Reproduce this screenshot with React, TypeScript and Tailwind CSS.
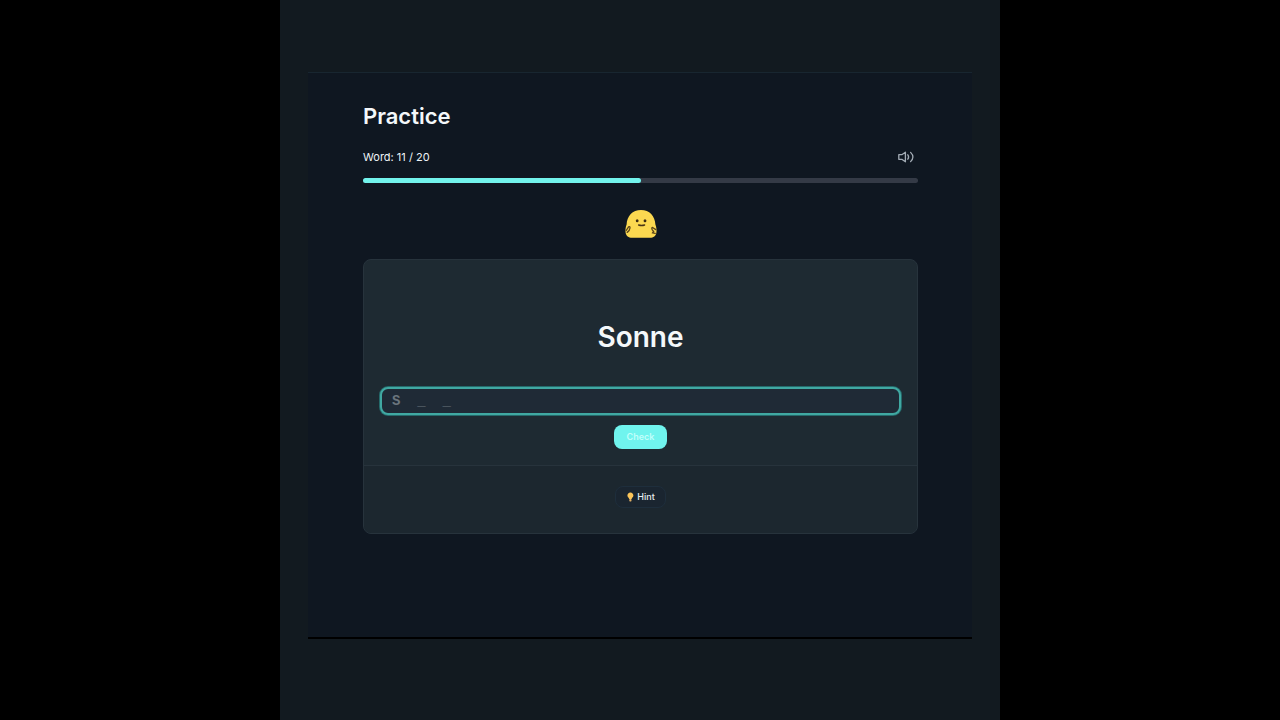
import { useState } from "react";

function Blob() {
  return (
    <svg viewBox="0 0 32 28" className="h-7 w-8" role="img" aria-label="Mascot">
      <path
        d="M16 0C7.5 0 2 6 1.6 14.5C0.6 17 0.2 20 0.6 22.5C1 26 3.6 27.6 7 27.8H25C28.4 27.6 31 26 31.4 22.5C31.8 20 31.4 17 30.4 14.5C30 6 24.5 0 16 0Z"
        fill="#fbd850"
      />
      <ellipse cx="12.2" cy="10.8" rx="1.4" ry="1.5" fill="#3d2c12" />
      <ellipse cx="20" cy="10.8" rx="1.4" ry="1.5" fill="#3d2c12" />
      <path d="M13.6 15Q16.6 16 19.6 15" fill="none" stroke="#4a3515" strokeWidth="1.4" strokeLinecap="round" />
      <path d="M1.2 20.5L3.6 16.8Q5.2 16 5 18Q4.8 20.6 2.2 22.4" fill="none" stroke="#5a4418" strokeWidth="1.3" strokeLinecap="round" />
      <path d="M30.8 19.6L28.4 18Q27 16.6 26.8 18.2Q26.8 20.4 28.6 21.4L27.6 22.8L30.2 23.4" fill="none" stroke="#5a4418" strokeWidth="1.3" strokeLinecap="round" />
    </svg>
  );
}

function Speaker() {
  return (
    <svg
      viewBox="0 0 16 12"
      className="h-3 w-4"
      fill="none"
      stroke="currentColor"
      strokeWidth="1.3"
      strokeLinecap="round"
      strokeLinejoin="round"
      aria-hidden="true"
    >
      <path d="M7.4 1.2V10.8L3.8 8.3H0.8V3.7H3.8Z" />
      <path d="M9.8 3.8Q11.4 6 9.8 8.2" />
      <path d="M12.6 1.4Q17.2 6 12.6 10.6" />
    </svg>
  );
}

function Bulb() {
  return (
    <svg viewBox="0 0 8 10" className="h-[10px] w-2" aria-hidden="true">
      <path d="M4.4 0.4C2.6 0.4 1.4 1.8 1.4 3.5C1.4 5 2.8 5.6 3.2 7H5.6C6 5.6 7.4 5 7.4 3.5C7.4 1.8 6.2 0.4 4.4 0.4Z" fill="#fbc55a" />
      <rect x="3.3" y="7" width="2.2" height="2.6" rx="0.8" fill="#e0ae64" />
    </svg>
  );
}

export default function App() {
  const [answer, setAnswer] = useState("");
  const current = 11;
  const total = 20;
  const done = current - 1;

  return (
    <div className="flex min-h-screen justify-center bg-black font-['Inter',sans-serif] text-[#f4f8fa]">
      <div className="flex w-full max-w-[720px] flex-col bg-[#121a20] px-7 pt-18 pb-[81px]">
        <main className="flex grow flex-col border-t border-b-2 border-t-[#182630] border-b-black bg-[#0f1721] pt-7 pr-[54px] pl-[55px]">
          <div className="w-full">
            <h1 className="text-[22px] leading-[30px] font-semibold">Practice</h1>

            <div className="mt-[14px] flex h-6 items-center justify-between pr-1">
              <span id="progress-label" className="text-[11px] text-[#eef3f6]">
                Word: {current} / {total}
              </span>
              <button type="button" aria-label="Play sound" className="text-[#a3acb5]">
                <Speaker />
              </button>
            </div>

            <div
              role="progressbar"
              aria-labelledby="progress-label"
              aria-valuemin={0}
              aria-valuemax={total}
              aria-valuenow={done}
              className="mt-[9px] h-[5px] overflow-hidden rounded-full bg-[#343a46]"
            >
              <div className="h-full rounded-r-full bg-[#72f3ec]" style={{ width: `${(done / total) * 100}%` }} />
            </div>

            <div className="mt-[27px] flex justify-center">
              <Blob />
            </div>

            <section className="mt-[21px] overflow-hidden rounded-lg border border-[#27333c] bg-[#1e2a32]">
              <form className="flex flex-col items-center px-4 pb-4" onSubmit={(e) => e.preventDefault()}>
                <h2 className="mt-[59px] text-[28px] leading-9 font-semibold">
                  <label htmlFor="answer">Sonne</label>
                </h2>
                <input
                  id="answer"
                  value={answer}
                  onChange={(e) => setAnswer(e.target.value)}
                  placeholder="S  _  _"
                  autoComplete="off"
                  className="mt-8 h-7 w-full rounded-lg border-2 border-[#40a8a2] bg-[#1f2a36] px-[10px] font-['Liberation_Mono',monospace] text-sm text-white ring-1 ring-[#256a6b] outline-none placeholder:font-bold placeholder:text-[#6b757d]"
                />
                <button
                  type="submit"
                  className="mt-[10px] h-6 rounded-lg bg-[#70f4ee] px-[13px] text-[9px] font-semibold text-[#c0fffb]"
                >
                  Check
                </button>
              </form>
              <div className="flex justify-center border-t border-[#27333c] bg-[#1c272f] pt-5 pb-[25px]">
                <button
                  type="button"
                  className="flex h-[22px] items-center gap-[3px] rounded-lg border border-[#1e2e3c] bg-[#1a2530] px-[10px] text-[9px] font-medium text-[#e6ecef]"
                >
                  <Bulb />
                  Hint
                </button>
              </div>
            </section>
          </div>
        </main>
      </div>
    </div>
  );
}
